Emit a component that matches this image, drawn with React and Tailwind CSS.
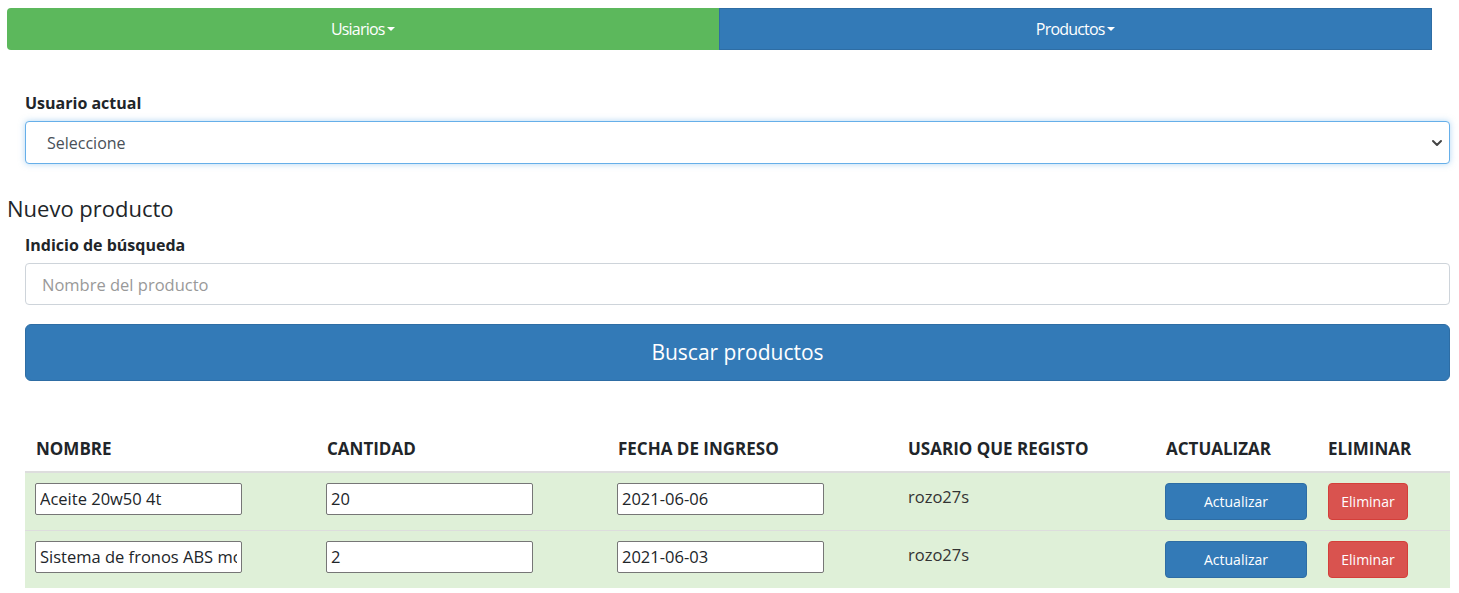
import { ChevronDown } from 'lucide-react'

const productos = [
  { nombre: 'Aceite 20w50 4t', cantidad: '20', fecha: '2021-06-06', usuario: 'rozo27s' },
  { nombre: 'Sistema de fronos ABS moto', cantidad: '2', fecha: '2021-06-03', usuario: 'rozo27s' },
]

function Caret() {
  return <span className="inline-block ml-[2px] align-middle w-0 h-0 border-l-[4px] border-r-[4px] border-t-[4px] border-l-transparent border-r-transparent border-t-white" />
}

export default function App() {
  return (
    <div className="min-h-screen bg-white text-[#212529] font-['Segoe_UI','Open_Sans',sans-serif]">
      <div className="pt-2 pl-[7px] pr-[27px]">
        <div className="flex h-[42px]">
          <button className="flex-1 flex items-center justify-center bg-[#5cb85c] text-white text-[16px] rounded-l-[4px] tracking-[-0.8px]">
            Usiarios<Caret />
          </button>
          <button className="flex-1 flex items-center justify-center bg-[#337ab7] text-white text-[16px] border border-[#2e6da4] tracking-[-0.8px]">
            Productos<Caret />
          </button>
        </div>
      </div>

      <div className="pl-[25px] pr-[9px] mt-[41px]">
        <label className="block font-bold text-[16px] leading-6 mb-[6px]">Usuario actual</label>
        <div className="relative">
          <select className="appearance-none w-full h-[43px] rounded-[4px] border border-[#66afe9] shadow-[0_0_6px_rgba(102,175,233,0.5)] pl-[21px] text-[16px] text-[#495057] bg-white outline-none">
            <option>Seleccione</option>
          </select>
          <ChevronDown className="absolute right-[5px] top-[14px] w-[16px] h-[16px] text-[#444] pointer-events-none" strokeWidth={3} />
        </div>
      </div>

      <h2 className="pl-[7px] mt-[30px] text-[22px] leading-7">Nuevo producto</h2>

      <div className="pl-[25px] pr-[9px]">
        <label className="block font-bold text-[16px] leading-6 mt-[11px] mb-[6px]">Indicio de búsqueda</label>
        <input
          placeholder="Nombre del producto"
          className="w-full h-[42px] rounded-[4px] border border-[#ced4da] px-4 text-[16.5px] placeholder:text-[#999] outline-none"
        />
        <button className="w-full h-[57px] mt-[19px] rounded-[6px] bg-[#337ab7] border border-[#2e6da4] text-white text-[21px]">
          Buscar productos
        </button>

        <table className="w-full mt-[55px] border-collapse">
          <thead>
            <tr className="border-b-2 border-[#dddddd] text-left text-[17px]">
              <th className="w-[291px] pl-[11px] pb-[9px] font-bold">NOMBRE</th>
              <th className="w-[291px] pl-[11px] pb-[9px] font-bold">CANTIDAD</th>
              <th className="w-[290px] pl-[11px] pb-[9px] font-bold">FECHA DE INGRESO</th>
              <th className="w-[258px] pl-[11px] pb-[9px] font-bold">USARIO QUE REGISTO</th>
              <th className="w-[162px] pl-[11px] pb-[9px] font-bold">ACTUALIZAR</th>
              <th className="pl-[11px] pb-[9px] font-bold">ELIMINAR</th>
            </tr>
          </thead>
          <tbody>
            {productos.map((p, i) => (
              <tr key={i} className="bg-[#dff0d8] border-t border-[#dddddd] align-top">
                <td className="pl-[10px] pt-[10px] pb-[10px]">
                  <input defaultValue={p.nombre} className="block w-[207px] h-[32px] border border-[#767676] rounded-[2px] bg-white px-[4px] text-[16.5px] outline-none" />
                </td>
                <td className="pl-[10px] pt-[10px]">
                  <input defaultValue={p.cantidad} className="block w-[207px] h-[32px] border border-[#767676] rounded-[2px] bg-white px-[4px] text-[16.5px] outline-none" />
                </td>
                <td className="pl-[10px] pt-[10px]">
                  <input defaultValue={p.fecha} className="block w-[207px] h-[32px] border border-[#767676] rounded-[2px] bg-white px-[4px] text-[16.5px] outline-none" />
                </td>
                <td className="pl-[11px] pt-[12px] text-[16.5px] text-[#333]">{p.usuario}</td>
                <td className="pl-[10px] pt-[10px] pb-[10px]">
                  <button className="block w-[142px] h-[37px] rounded-[4px] bg-[#337ab7] border border-[#2e6da4] text-white text-[14px]">Actualizar</button>
                </td>
                <td className="pl-[11px] pt-[10px] pb-[10px]">
                  <button className="block w-[80px] h-[37px] rounded-[4px] bg-[#d9534f] border border-[#d43f3a] text-white text-[14px]">Eliminar</button>
                </td>
              </tr>
            ))}
          </tbody>
        </table>
      </div>
    </div>
  )
}
